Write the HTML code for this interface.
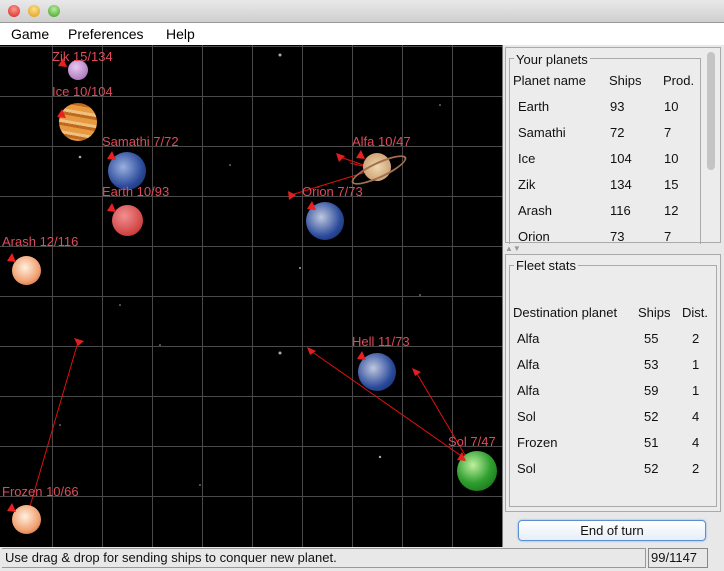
<!DOCTYPE html><html><head><style>
body{margin:0;width:724px;height:571px;overflow:hidden;background:#e8e8e8;font-family:"Liberation Sans",sans-serif;position:relative}
.abs{position:absolute}
.tb{left:0;top:0;width:724px;height:22px;background:linear-gradient(#e9e9e9,#cfcfcf);border-bottom:1px solid #999}
.dot{width:12px;height:12px;border-radius:50%;top:5px}
.menu{top:23px;left:0;width:724px;height:22px;background:#fff;font-size:14px}
.menu span{position:absolute;top:3px}
.map{left:0;top:45px;width:502px;height:502px;background:#000;overflow:hidden}
.lbl{color:#e04a5a;font-size:13px;position:absolute;white-space:nowrap}
.pan{font-size:13px;color:#111}
.pl{position:absolute;border-radius:50%}
</style></head><body>
<div class="abs tb"></div>
<div class="abs dot" style="left:8px;background:radial-gradient(circle at 50% 35%,#ff9a90,#d0201a)"></div>
<div class="abs dot" style="left:28px;background:radial-gradient(circle at 50% 35%,#ffe08a,#d99a10)"></div>
<div class="abs dot" style="left:48px;background:radial-gradient(circle at 50% 35%,#b8f0a0,#3a9a20)"></div>
<div class="abs menu"><span style="left:11px">Game</span><span style="left:68px">Preferences</span><span style="left:166px">Help</span></div>
<div class="abs map">
<svg width="502" height="502" style="position:absolute;left:0;top:0">
<g stroke="#4a4a4a" stroke-width="1">
<line x1="52.5" y1="0" x2="52.5" y2="502"/><line x1="102.5" y1="0" x2="102.5" y2="502"/><line x1="152.5" y1="0" x2="152.5" y2="502"/><line x1="202.5" y1="0" x2="202.5" y2="502"/><line x1="252.5" y1="0" x2="252.5" y2="502"/><line x1="302.5" y1="0" x2="302.5" y2="502"/><line x1="352.5" y1="0" x2="352.5" y2="502"/><line x1="402.5" y1="0" x2="402.5" y2="502"/><line x1="452.5" y1="0" x2="452.5" y2="502"/>
<line x1="0" y1="1.5" x2="502" y2="1.5"/><line x1="0" y1="51.5" x2="502" y2="51.5"/><line x1="0" y1="101.5" x2="502" y2="101.5"/><line x1="0" y1="151.5" x2="502" y2="151.5"/><line x1="0" y1="201.5" x2="502" y2="201.5"/><line x1="0" y1="251.5" x2="502" y2="251.5"/><line x1="0" y1="301.5" x2="502" y2="301.5"/><line x1="0" y1="351.5" x2="502" y2="351.5"/><line x1="0" y1="401.5" x2="502" y2="401.5"/><line x1="0" y1="451.5" x2="502" y2="451.5"/>
</g>
<g fill="#aaa"><circle cx="280" cy="10" r="1.5"/><circle cx="80" cy="112" r="1.3"/><circle cx="280" cy="308" r="1.5"/><circle cx="380" cy="412" r="1.2"/><circle cx="230" cy="120" r="0.8"/><circle cx="440" cy="60" r="0.8"/><circle cx="160" cy="300" r="0.8"/><circle cx="60" cy="380" r="0.8"/><circle cx="200" cy="440" r="0.8"/><circle cx="420" cy="250" r="0.8"/><circle cx="300" cy="223" r="1"/><circle cx="120" cy="260" r="0.8"/></g>
<g stroke="#e01010" stroke-width="1">
<line x1="78" y1="297" x2="26" y2="475"/><line x1="311" y1="306" x2="470" y2="417"/><line x1="416" y1="327" x2="465" y2="410"/><line x1="291" y1="150" x2="376" y2="124"/><line x1="340" y1="112" x2="375" y2="124"/><line x1="350" y1="118" x2="375" y2="124"/>
</g>
<g fill="#e02020"><polygon points="74,293 84,296 78,301"/><polygon points="307,302 316,306 310,310"/><polygon points="412,323 421,327 415,331"/><polygon points="288,146 296,150 289,155"/><polygon points="336,108 345,111 339,117"/></g>
</svg>
<div class="pl" style="left:68px;top:15px;width:20px;height:20px;background:radial-gradient(circle at 40% 35%,#e8c8f0,#9a60b0)"></div>
<div class="pl" style="left:59px;top:58px;width:38px;height:38px;background:repeating-linear-gradient(10deg,#e89a40 0 5px,#c06a20 5px 8px,#f0c080 8px 11px)"></div>
<div class="pl" style="left:108px;top:107px;width:38px;height:38px;background:radial-gradient(circle at 40% 40%,#9ab0e0,#2a4a9a 60%,#102050)"></div>
<div class="pl" style="left:112px;top:160px;width:31px;height:31px;background:radial-gradient(circle at 40% 35%,#f09090,#c02020)"></div>
<div class="pl" style="left:12px;top:211px;width:29px;height:29px;background:radial-gradient(circle at 45% 40%,#fff0e0,#f0a070 60%,#c05030)"></div>
<div class="pl" style="left:363px;top:108px;width:28px;height:28px;background:radial-gradient(circle,#f0d8b0,#c09060)"></div>
<div class="pl" style="left:349px;top:117px;width:56px;height:12px;border:2px solid #a07050;transform:rotate(-25deg);background:transparent"></div>
<div class="pl" style="left:306px;top:157px;width:38px;height:38px;background:radial-gradient(circle at 40% 40%,#c0c8e0,#2a4a9a 60%,#102050)"></div>
<div class="pl" style="left:358px;top:308px;width:38px;height:38px;background:radial-gradient(circle at 40% 40%,#c0c8e0,#2a4a9a 60%,#102050)"></div>
<div class="pl" style="left:457px;top:406px;width:40px;height:40px;background:radial-gradient(circle at 40% 35%,#c0f0a0,#30a030 50%,#106010)"></div>
<div class="pl" style="left:12px;top:460px;width:29px;height:29px;background:radial-gradient(circle at 45% 40%,#fff0e0,#f0a070 60%,#c05030)"></div>
<svg width="502" height="502" style="position:absolute;left:0;top:0"><g fill="#e82020">
<polygon points="63,13 67,22 58,21"/><polygon points="62,64 66,73 57,72"/><polygon points="112,106 116,115 107,114"/><polygon points="112,158 116,167 107,166"/><polygon points="12,208 16,217 7,216"/><polygon points="361,105 365,114 356,113"/><polygon points="312,156 316,165 307,164"/><polygon points="362,306 366,315 357,314"/><polygon points="462,407 466,416 457,415"/><polygon points="12,458 16,467 7,466"/></g></svg>
<div class="lbl" style="left:52px;top:4px">Zik 15/134</div>
<div class="lbl" style="left:52px;top:39px">Ice 10/104</div>
<div class="lbl" style="left:102px;top:89px">Samathi 7/72</div>
<div class="lbl" style="left:102px;top:139px">Earth 10/93</div>
<div class="lbl" style="left:2px;top:189px">Arash 12/116</div>
<div class="lbl" style="left:352px;top:89px">Alfa 10/47</div>
<div class="lbl" style="left:302px;top:139px">Orion 7/73</div>
<div class="lbl" style="left:352px;top:289px">Hell 11/73</div>
<div class="lbl" style="left:448px;top:389px">Sol 7/47</div>
<div class="lbl" style="left:2px;top:439px">Frozen 10/66</div>
</div>
<div class="abs" style="left:502px;top:45px;width:1px;height:502px;background:#777"></div>
<div class="abs pan" style="left:505px;top:47px;width:214px;height:194px;border:1px solid #aaa;background:#ececec"></div>
<div class="abs" style="left:509px;top:58px;width:190px;height:185px;border:1px solid #aaa;border-bottom:none"></div>
<div class="abs pan" style="left:514px;top:52px;background:#ececec;padding:0 2px">Your planets</div>
<div class="abs" style="left:707px;top:52px;width:8px;height:118px;border-radius:4px;background:#c4c4c4"></div>
<div class="abs pan" style="left:513px;top:73px">Planet name</div><div class="abs pan" style="left:609px;top:73px">Ships</div><div class="abs pan" style="left:663px;top:73px">Prod.</div>
<div class="abs" style="left:505px;top:94px;width:200px;height:147px;overflow:hidden">
<div class="abs pan" style="left:13px;top:0;line-height:26px">Earth<br>Samathi<br>Ice<br>Zik<br>Arash<br>Orion</div>
<div class="abs pan" style="left:105px;top:0;line-height:26px">93<br>72<br>104<br>134<br>116<br>73</div>
<div class="abs pan" style="left:159px;top:0;line-height:26px">10<br>7<br>10<br>15<br>12<br>7</div>
</div>
<div class="abs" style="left:505px;top:244px;font-size:8px;color:#999">▲▼</div>
<div class="abs" style="left:505px;top:254px;width:214px;height:256px;border:1px solid #aaa;background:#ececec"></div>
<div class="abs" style="left:509px;top:265px;width:206px;height:240px;border:1px solid #aaa"></div>
<div class="abs pan" style="left:514px;top:258px;background:#ececec;padding:0 2px">Fleet stats</div>
<div class="abs pan" style="left:513px;top:305px">Destination planet</div><div class="abs pan" style="left:638px;top:305px">Ships</div><div class="abs pan" style="left:682px;top:305px">Dist.</div>
<div class="abs pan" style="left:517px;top:326px;line-height:26px">Alfa<br>Alfa<br>Alfa<br>Sol<br>Frozen<br>Sol</div>
<div class="abs pan" style="left:644px;top:326px;line-height:26px">55<br>53<br>59<br>52<br>51<br>52</div>
<div class="abs pan" style="left:692px;top:326px;line-height:26px">2<br>1<br>1<br>4<br>4<br>2</div>
<div class="abs pan" style="left:518px;top:520px;width:186px;height:19px;border:1px solid #5a90d0;border-radius:4px;background:linear-gradient(#fff,#e6eef8);text-align:center;line-height:19px;box-shadow:0 0 2px #7ab0f0">End of turn</div>
<div class="abs" style="left:0;top:547px;width:724px;height:24px;background:#e8e8e8"></div>
<div class="abs pan" style="left:2px;top:548px;width:640px;height:18px;border:1px solid #999;border-left:none;line-height:18px;padding-left:3px">Use drag &amp; drop for sending ships to conquer new planet.</div>
<div class="abs pan" style="left:648px;top:548px;width:56px;height:18px;border:1px solid #888;line-height:18px;padding-left:2px">99/1147</div>
</body></html>
